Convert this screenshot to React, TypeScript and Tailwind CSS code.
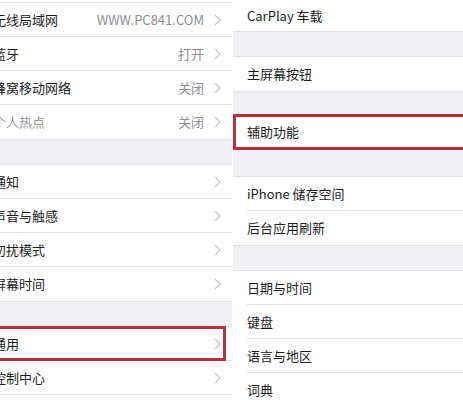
type Row = {
  label: string;
  value?: string;
  muted?: boolean;
  highlight?: boolean;
};

function Chevron() {
  return (
    <svg width="7" height="12" viewBox="0 0 7 12" className="shrink-0">
      <path d="M1 1l5 5-5 5" fill="none" stroke="#c4c4c9" strokeWidth="1.3" />
    </svg>
  );
}

function Gap({ h }: { h: string }) {
  return <div className={`${h} shrink-0 bg-[#efeff4] border-y border-[#dedee3]`} />;
}

function LeftRow({ row, last }: { row: Row; last?: boolean }) {
  return (
    <div
      className={`relative h-[34px] shrink-0 flex items-center bg-white ${
        last ? "" : "border-b border-[#e2e2e6]"
      }`}
    >
      <span
        className={`-ml-[7px] flex-1 text-[13px] ${row.muted ? "text-[#9a9aa0]" : "text-[#1c1c1e]"}`}
      >
        {row.label}
      </span>
      {row.value && <span className="text-[13px] text-[#8e8e93] mr-[10px]">{row.value}</span>}
      <span className="mr-[11px]">
        <Chevron />
      </span>
      {row.highlight && (
        <div className="absolute -left-[3px] top-[-1px] w-[229px] h-[35px] border-[3px] border-[#b5303c]" />
      )}
    </div>
  );
}

function RightRow({ row, last, h = "h-[34px]" }: { row: Row; last?: boolean; h?: string }) {
  return (
    <div className={`relative ${h} shrink-0 flex bg-white pl-[14px]`}>
      <div
        className={`flex-1 flex items-center ${last ? "" : "border-b border-[#e2e2e6]"}`}
      >
        <span className="text-[13px] text-[#1c1c1e]">{row.label}</span>
      </div>
      {row.highlight && (
        <div className="absolute left-0 -top-[1px] -right-[4px] h-[36px] border-[3px] border-[#b5303c]" />
      )}
    </div>
  );
}

const leftA: Row[] = [
  { label: "无线局域网", value: "WWW.PC841.COM" },
  { label: "蓝牙", value: "打开" },
  { label: "蜂窝移动网络", value: "关闭" },
  { label: "个人热点", value: "关闭", muted: true },
];
const leftB: Row[] = [
  { label: "通知" },
  { label: "声音与触感" },
  { label: "勿扰模式" },
  { label: "屏幕时间" },
];
const leftC: Row[] = [{ label: "通用", highlight: true }, { label: "控制中心" }, { label: "显示与亮度" }];

export default function App() {
  return (
    <div
      className="w-[463px] h-[400px] overflow-hidden flex bg-white"
      style={{ fontFamily: '"Noto Sans CJK SC", "Noto Sans", sans-serif' }}
    >
      {/* left screen */}
      <div className="w-[232px] shrink-0 overflow-hidden flex flex-col">
        <div className="h-[3px] shrink-0 bg-white border-b border-[#e2e2e6]" />
        {leftA.map((r, i) => (
          <LeftRow key={r.label} row={r} last={i === leftA.length - 1} />
        ))}
        <Gap h="h-[26px]" />
        {leftB.map((r, i) => (
          <LeftRow key={r.label} row={r} last={i === leftB.length - 1} />
        ))}
        <Gap h="h-[26px]" />
        {leftC.map((r) => (
          <LeftRow key={r.label} row={r} />
        ))}
      </div>

      {/* right screen */}
      <div className="flex-1 overflow-hidden flex flex-col pl-px">
        <RightRow row={{ label: "CarPlay 车载" }} last h="h-[31px]" />
        <Gap h="h-[26px]" />
        <RightRow row={{ label: "主屏幕按钮" }} last />
        <Gap h="h-[24px]" />
        <RightRow row={{ label: "辅助功能", highlight: true }} last />
        <Gap h="h-[28px]" />
        <RightRow row={{ label: "iPhone 储存空间" }} />
        <RightRow row={{ label: "后台应用刷新" }} last />
        <Gap h="h-[26px]" />
        <RightRow row={{ label: "日期与时间" }} />
        <RightRow row={{ label: "键盘" }} />
        <RightRow row={{ label: "语言与地区" }} />
        <RightRow row={{ label: "词典" }} />
      </div>
    </div>
  );
}
